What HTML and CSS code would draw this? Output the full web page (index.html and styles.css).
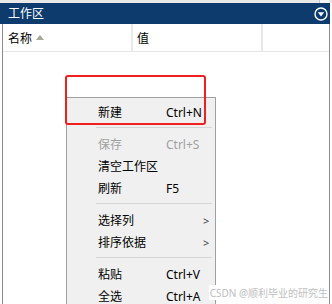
FILE: index.html
```html
<!DOCTYPE html>
<html lang="zh">
<head>
    <meta charset="UTF-8">
    <title>工作区</title>
    <link rel="stylesheet" href="styles.css">
</head>
<body>
    <div class="top-strip"><span class="tab-stub"></span></div>
    <div class="panel">
        <div class="titlebar">
            <span class="title">工作区</span>
            <svg class="title-btn" width="14" height="14" viewBox="0 0 14 14">
                <circle cx="7" cy="7" r="6" fill="none" stroke="#fff" stroke-width="1.4"/>
                <path d="M3.8 5.2 L10.2 5.2 L7 9.6 Z" fill="#fff"/>
            </svg>
        </div>
        <div class="table">
            <div class="table-head">
                <div class="col col-name">名称 <span class="sort-arrow"></span></div>
                <div class="col col-value">值</div>
                <div class="col col-extra"></div>
            </div>
            <div class="table-body"></div>
        </div>
    </div>

    <!-- menú contextual -->
    <div class="context-menu">
        <div class="menu-item"><span class="label">新建</span><span class="key">Ctrl+N</span></div>
        <div class="menu-sep"></div>
        <div class="menu-item disabled"><span class="label">保存</span><span class="key">Ctrl+S</span></div>
        <div class="menu-item"><span class="label">清空工作区</span><span class="key"></span></div>
        <div class="menu-item"><span class="label">刷新</span><span class="key">F5</span></div>
        <div class="menu-sep"></div>
        <div class="menu-item"><span class="label">选择列</span><span class="key"></span><span class="arrow">&gt;</span></div>
        <div class="menu-item"><span class="label">排序依据</span><span class="key"></span><span class="arrow">&gt;</span></div>
        <div class="menu-sep"></div>
        <div class="menu-item"><span class="label">粘贴</span><span class="key">Ctrl+V</span></div>
        <div class="menu-item"><span class="label">全选</span><span class="key">Ctrl+A</span></div>
    </div>

    <div class="highlight-box"></div>
    <div class="watermark">CSDN @顺利毕业的研究生</div>
</body>
</html>
```

FILE: styles.css
```css
body {
    margin: 0;
    width: 332px;
    height: 304px;
    overflow: hidden;
    background: white;
    font-family: "Noto Sans", "Noto Sans CJK SC", sans-serif;
    font-size: 12px;
    color: #000;
    position: relative;
    display: flex;
    flex-direction: column;
}
.top-strip {
    height: 3px;
    background: #e9e9e9;
    display: flex;
    justify-content: flex-end;
    padding-right: 3px;
}
.tab-stub {
    width: 9px;
    background: #f6f6f6;
    border-left: 1px solid #c8c8c8;
}
.panel {
    flex: 1;
    width: 330px;
    display: flex;
    flex-direction: column;
}
.titlebar {
    height: 21px;
    background: #0d3b6e;
    color: white;
    display: flex;
    align-items: center;
    justify-content: space-between;
    padding: 0 2px 0 8px;
}
.title {
    font-size: 12px;
    line-height: 1;
}
.title-btn {
    display: block;
}
.table {
    flex: 1;
    margin-left: 2px;
    border-left: 1px solid #8c8c8c;
    border-right: 1px solid #8c8c8c;
    display: flex;
    flex-direction: column;
}
.table-head {
    height: 27px;
    display: grid;
    grid-template-columns: 130px 130px 1fr;
    border-bottom: 1px solid #e6e6e6;
}
.col {
    display: flex;
    align-items: center;
    border-right: 2px solid #e8e8e8;
}
.col-name {
    padding-left: 5px;
    gap: 4px;
}
.col-value {
    padding-left: 4px;
}
.col-extra {
    border-right: none;
}
.sort-arrow {
    width: 0;
    height: 0;
    border-left: 4px solid transparent;
    border-right: 4px solid transparent;
    border-bottom: 5px solid #a8a898;
    margin-top: -1px;
}
.table-body {
    flex: 1;
}
.context-menu {
    position: absolute;
    left: 66px;
    top: 97px;
    width: 148px;
    height: 204px;
    overflow: hidden;
    background: #f0f0f0;
    border: 1px solid #a0a0a0;
    border-bottom: none;
    padding-top: 3px;
}
.menu-item {
    height: 22px;
    display: flex;
    align-items: center;
    padding-left: 31px;
}
.menu-item .label {
    width: 68px;
}
.menu-item .key {
    flex: 1;
}
.menu-item .arrow {
    width: 12px;
    color: #444;
    font-size: 11px;
}
.menu-item.disabled {
    color: #a0a0a0;
}
.menu-sep {
    height: 1px;
    background: #d5d5d5;
    margin: 4px 3px 5px 29px;
}
.highlight-box {
    position: absolute;
    left: 65px;
    top: 75px;
    width: 137px;
    height: 46px;
    border: 2.5px solid #f0201e;
    border-radius: 3px;
}
.watermark {
    position: absolute;
    right: 4px;
    top: 285px;
    font-size: 10px;
    color: #c0c0c0;
    background: white;
    padding-left: 1px;
}
```
